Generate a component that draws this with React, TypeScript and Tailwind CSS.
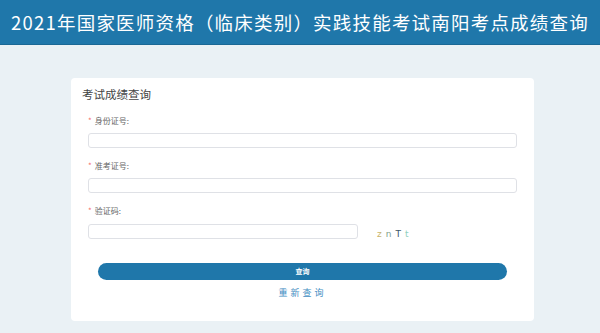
const fields = [
  { label: "身份证号:", wide: true },
  { label: "准考证号:", wide: true },
];

function Field({ label }: { label: string }) {
  return (
    <div className="mt-[12px]">
      <div className="flex items-center h-[12px] leading-[12px] text-[8px] text-[#666]">
        <span className="text-[#f56c6c] mr-[3px]">*</span>
        <span>{label}</span>
      </div>
      <input className="mt-[6px] block w-full h-[15px] border border-[#dfe1e6] rounded-[3px] bg-white outline-none" />
    </div>
  );
}

export default function App() {
  return (
    <div className="min-h-[333px] bg-[#eaf1f5] font-['Noto_Sans_CJK_SC','Noto_Sans',sans-serif]">
      {/* Header */}
      <header className="h-[45px] bg-[#1f77aa] border-b border-[#1a6895] flex items-center justify-center">
        <h1 className="text-white text-[18.5px] tracking-[1.2px] leading-none whitespace-nowrap">
          2021年国家医师资格（临床类别）实践技能考试南阳考点成绩查询
        </h1>
      </header>

      <div className="pt-[33px]">
        <div className="ml-[71px] w-[463px] h-[243px] bg-white rounded-[4px] pt-[8px] pl-[11px]">
          <h2 className="text-[11.5px] leading-[17px] text-[#444]">考试成绩查询</h2>

          <div className="ml-[6px] w-[429px]">
            {fields.map((f) => (
              <Field key={f.label} label={f.label} />
            ))}

            {/* Captcha */}
            <div className="mt-[12px]">
              <div className="flex items-center h-[12px] leading-[12px] text-[8px] text-[#666]">
                <span className="text-[#f56c6c] mr-[3px]">*</span>
                <span>验证码:</span>
              </div>
              <div className="mt-[6px] flex items-center">
                <input className="block w-[270px] h-[15px] border border-[#dfe1e6] rounded-[3px] bg-white outline-none" />
                <div className="ml-[19px] pt-[7px] flex items-center gap-[4px] text-[9px] font-['DejaVu_Sans',sans-serif] leading-none">
                  <span className="text-[#c9b46a]">z</span>
                  <span className="text-[#7fa08a]">n</span>
                  <span className="text-[#3d5566]">T</span>
                  <span className="text-[#8fd0c0]">t</span>
                </div>
              </div>
            </div>

            {/* Submit */}
            <button className="mt-[24px] mx-[10px] w-[409px] h-[17px] rounded-full bg-[#1f77aa] text-white text-[7px] font-bold flex items-center justify-center">
              查询
            </button>
            <div className="mt-[7px] text-center text-[9px] leading-[12px] tracking-[3px] text-[#3f8dc2]">
              重新查询
            </div>
          </div>
        </div>
      </div>
    </div>
  );
}
